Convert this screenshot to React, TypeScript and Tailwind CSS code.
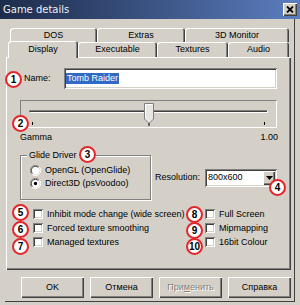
import React from "react";

const raised =
  "shadow-[inset_1px_1px_0_#ffffff,inset_-1px_-1px_0_#404040,inset_-2px_-2px_0_#808080]";
const sunken =
  "shadow-[inset_1px_1px_0_#808080,inset_-1px_-1px_0_#ffffff,inset_2px_2px_0_#404040,inset_-2px_-2px_0_#d4d0c8]";
const tabShadow =
  "shadow-[inset_1px_1px_0_#ffffff,inset_-1px_0_0_#404040,inset_-2px_0_0_#808080]";

function Badge({ n, pos }: { n: string; pos: string }) {
  return (
    <div
      className={`absolute ${pos} w-[17px] h-[17px] rounded-full border-2 border-[#e3262b] bg-white flex items-center justify-center text-[10px] leading-none font-bold text-black font-['Liberation_Sans',sans-serif] z-20`}
    >
      {n}
    </div>
  );
}

function Check({ label }: { label: string }) {
  return (
    <div className="h-[14px] flex items-center gap-[4px]">
      <div className={`w-[10px] h-[10px] bg-white ${sunken}`} />
      <span>{label}</span>
    </div>
  );
}

function Radio({ label, checked }: { label: string; checked?: boolean }) {
  return (
    <div className="h-[13px] flex items-center gap-[4px]">
      <svg width="11" height="11" viewBox="0 0 12 12">
        <path d="M10 2 A5.5 5.5 0 0 0 2 10" stroke="#808080" strokeWidth="1" fill="none" />
        <path d="M2 10 A5.5 5.5 0 0 0 10 2" stroke="#ffffff" strokeWidth="1" fill="none" />
        <circle cx="6" cy="6" r="4.5" fill="#ffffff" />
        <path d="M9.2 2.8 A4.5 4.5 0 0 0 2.8 9.2" stroke="#404040" strokeWidth="1" fill="none" />
        {checked && <circle cx="6" cy="6" r="1.8" fill="#000" />}
      </svg>
      <span>{label}</span>
    </div>
  );
}

function Button({ children, disabled }: { children: React.ReactNode; disabled?: boolean }) {
  return (
    <div
      className={`w-[63px] h-[21px] flex items-center justify-center ${raised} ${
        disabled ? "text-[#808080] [text-shadow:1px_1px_0_#ffffff]" : "text-black"
      }`}
    >
      {children}
    </div>
  );
}

export default function App() {
  return (
    <div className="w-[300px] h-[305px] bg-[#d4d0c8] relative overflow-hidden flex flex-col text-[9px] leading-[11px] text-black font-['Liberation_Sans',sans-serif]">
      {/* title bar */}
      <div className="h-[19px] shrink-0 flex items-center justify-between pl-[3px] pr-[3px] bg-linear-to-r from-[#1d2c4b] to-[#5c7ec0]">
        <span className="text-[10px] leading-[12px] text-[#eef0f4] font-['DejaVu_Sans',sans-serif]">
          Game details
        </span>
        <div className={`w-[14px] h-[13px] bg-[#d4d0c8] flex items-center justify-center ${raised}`}>
          <svg width="8" height="7" viewBox="0 0 8 7">
            <path d="M1 0.5 L7 6.5 M7 0.5 L1 6.5" stroke="#000" strokeWidth="1.8" />
          </svg>
        </div>
      </div>

      {/* body */}
      <div className="flex-1 flex flex-col ml-[5px] mr-[5px] mb-[3px] border-r border-b border-[#404040]">
        {/* tabs row 1 */}
        <div className="mt-[9px] ml-[5px] flex h-[14px]">
          <div className={`w-[87px] h-[14px] rounded-t-[3px] flex items-center justify-center ${tabShadow}`}>DOS</div>
          <div className={`w-[88px] h-[14px] rounded-t-[3px] flex items-center justify-center ${tabShadow}`}>Extras</div>
          <div className={`w-[104px] h-[14px] rounded-t-[3px] flex items-center justify-center ${tabShadow}`}>3D Monitor</div>
        </div>
        {/* tabs row 2 */}
        <div className="ml-[3px] flex items-end h-[15px]">
          <div className={`relative z-10 w-[70px] h-[17px] mb-[-1px] bg-[#d4d0c8] rounded-t-[3px] flex items-center justify-center pb-[1px] ${tabShadow}`}>
            Display
          </div>
          <div className={`w-[79px] h-[15px] rounded-t-[3px] flex items-center justify-center ${tabShadow}`}>Executable</div>
          <div className={`w-[71px] h-[15px] rounded-t-[3px] flex items-center justify-center ${tabShadow}`}>Textures</div>
          <div className={`w-[61px] h-[15px] rounded-t-[3px] flex items-center justify-center ${tabShadow}`}>Audio</div>
        </div>

        {/* panel */}
        <div className={`ml-[1px] w-[285px] h-[213px] flex flex-col ${raised}`}>
          {/* name row */}
          <div className="mt-[11px] ml-[18px] flex items-center h-[21px]">
            <span className="w-[40px]">Name:</span>
            <div className={`w-[213px] h-[21px] bg-white flex items-center pl-[2px] ${sunken}`}>
              <span className="bg-[#316ac5] text-white px-[1px] leading-[11px]">Tomb Raider</span>
            </div>
          </div>

          {/* slider group */}
          <div className="mt-[11px] ml-[14px] w-[257px] h-[28px] relative border border-t-[#808080] border-l-[#808080] border-r-white border-b-white">
            <div className="mt-[9px] ml-[8px] w-[239px] h-[3px] border-t border-l border-[#808080] border-b border-b-white border-r border-r-white bg-[#404040]" />
            <div className="mt-[9px] ml-[11px] w-[233px] flex justify-between">
              <div className="w-px h-[3px] bg-black" />
              <div className="w-px h-[3px] bg-black" />
            </div>
            <svg className="absolute left-[123px] top-[2px]" width="11" height="23" viewBox="0 0 11 23">
              <path d="M0.5 0.5 H9.5 V16 L5 20.5 L0.5 16 Z" fill="#e8e6e2" stroke="#808080" />
              <path d="M1.5 1.5 H8.5" stroke="#ffffff" />
              <path d="M1.5 1.5 V15.5" stroke="#ffffff" />
              <path d="M5 20 V23" stroke="#000" />
            </svg>
          </div>

          {/* gamma */}
          <div className="mt-[3px] ml-[14px] w-[258px] flex justify-between h-[12px] items-center">
            <span>Gamma</span>
            <span>1.00</span>
          </div>

          {/* glide + resolution */}
          <div className="mt-[12px] ml-[14px] flex items-center">
            <div className="relative w-[131px] h-[45px] border border-[#808080] shadow-[1px_1px_0_#ffffff,inset_1px_1px_0_#ffffff] pt-[8px] pl-[9px] flex flex-col">
              <span className="absolute left-[6px] top-[-6px] bg-[#d4d0c8] px-[2px]">Glide Driver</span>
              <Radio label="OpenGL (OpenGlide)" />
              <Radio label="Direct3D (psVoodoo)" checked />
            </div>
            <span className="ml-[4px] w-[50px]">Resolution:</span>
            <div className={`w-[72px] h-[18px] bg-white flex items-center justify-between pl-[3px] pr-[2px] ${sunken}`}>
              <span>800x600</span>
              <div className={`w-[12px] h-[14px] bg-[#d4d0c8] flex items-center justify-center ${raised}`}>
                <svg width="7" height="4" viewBox="0 0 7 4">
                  <path d="M0 0 H7 L3.5 4 Z" fill="#000" />
                </svg>
              </div>
            </div>
          </div>

          {/* checkboxes */}
          <div className="mt-[7px] ml-[27px] flex">
            <div className="w-[172px] flex flex-col">
              <Check label="Inhibit mode change (wide screen)" />
              <Check label="Forced texture smoothing" />
              <Check label="Managed textures" />
            </div>
            <div className="flex flex-col">
              <Check label="Full Screen" />
              <Check label="Mipmapping" />
              <Check label="16bit Colour" />
            </div>
          </div>
        </div>

        {/* buttons */}
        <div className="mt-[7px] ml-[16px] flex gap-[6px]">
          <Button>OK</Button>
          <Button>Отмена</Button>
          <Button disabled>
            <span>
              При<span className="underline">м</span>енить
            </span>
          </Button>
          <Button>Справка</Button>
        </div>
      </div>

      <Badge n="1" pos="left-[5px] top-[71px]" />
      <Badge n="2" pos="left-[12px] top-[115px]" />
      <Badge n="3" pos="left-[79px] top-[146px]" />
      <Badge n="4" pos="left-[269px] top-[179px]" />
      <Badge n="5" pos="left-[12px] top-[204px]" />
      <Badge n="6" pos="left-[12px] top-[221px]" />
      <Badge n="7" pos="left-[12px] top-[238px]" />
      <Badge n="8" pos="left-[186px] top-[206px]" />
      <Badge n="9" pos="left-[186px] top-[222px]" />
      <Badge n="10" pos="left-[186px] top-[238px]" />
    </div>
  );
}
